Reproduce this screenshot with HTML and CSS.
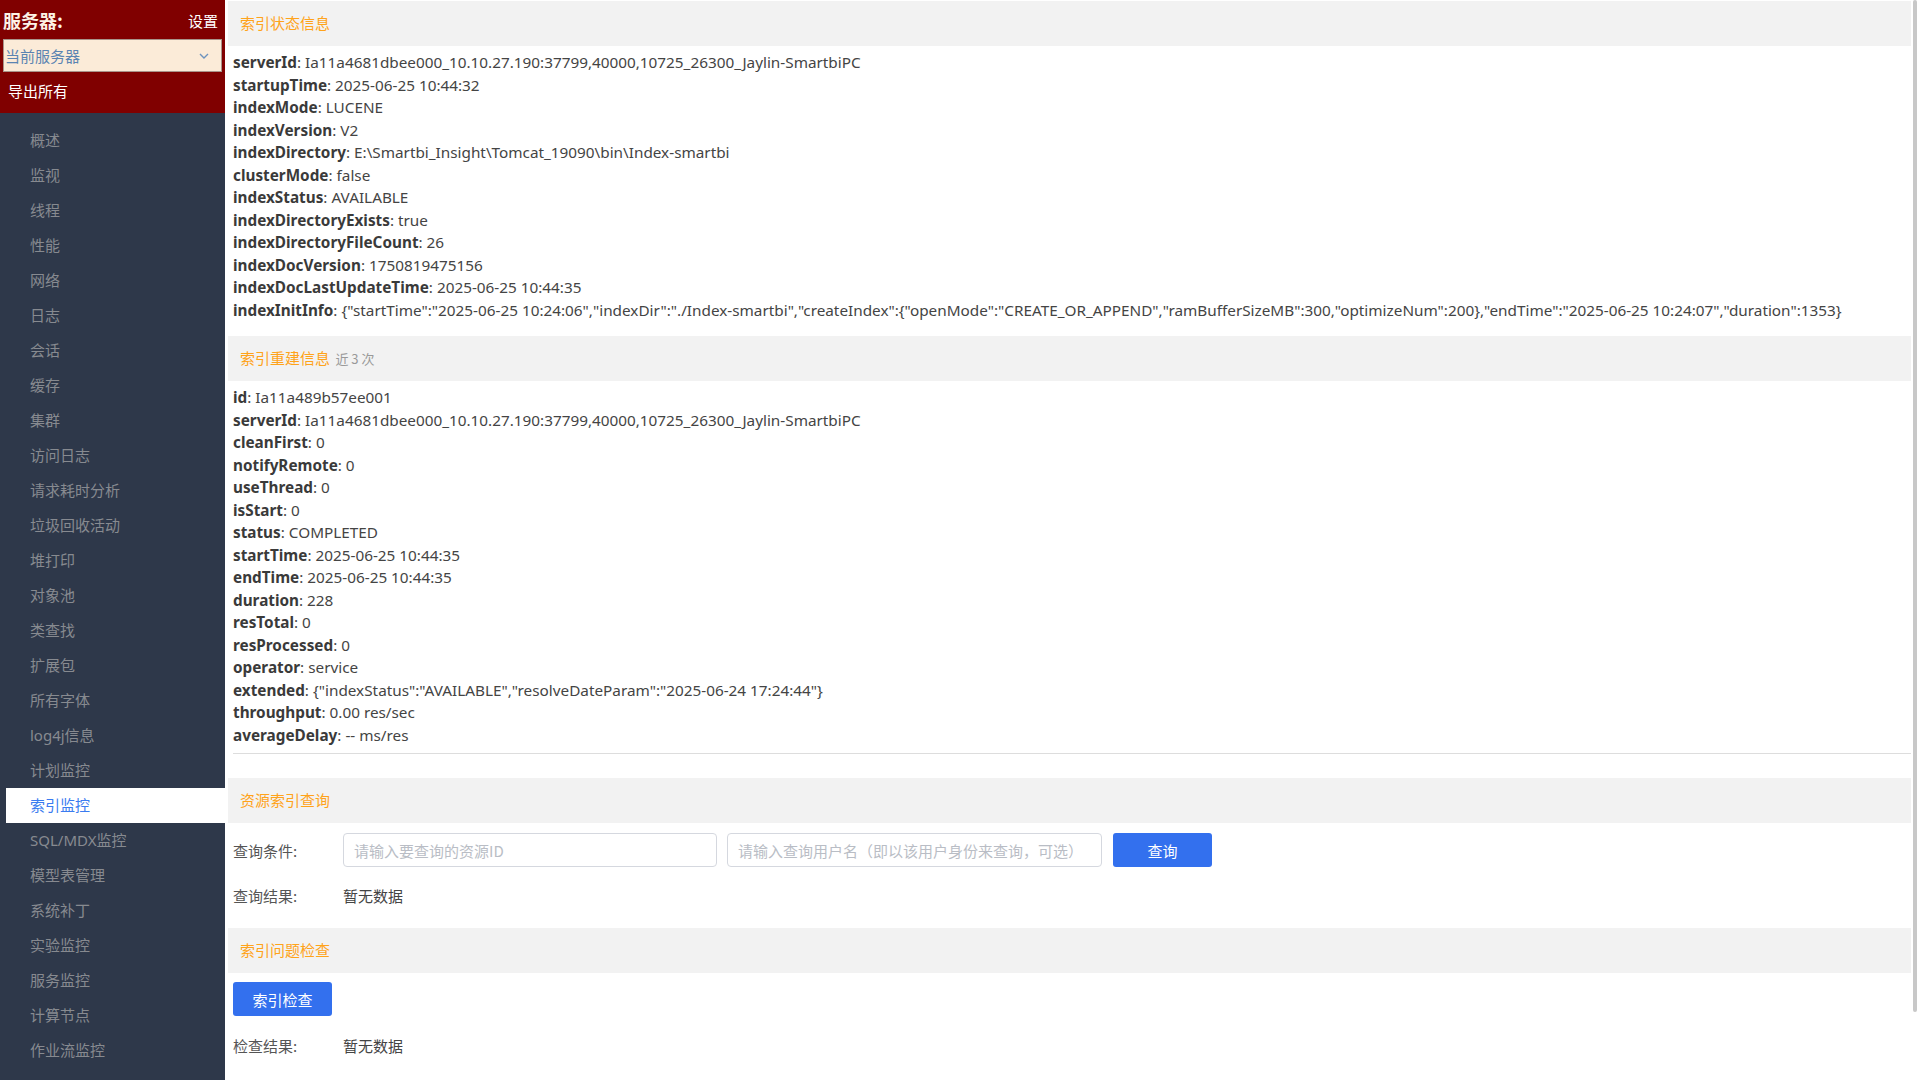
FILE: index.html
```html
<!DOCTYPE html>
<html lang="zh-CN">
<head>
<meta charset="utf-8">
<title>索引监控</title>
<link rel="stylesheet" href="styles.css">
</head>
<body>
<div class="app">
  <aside class="sidebar">
    <div class="side-head">
      <div class="title-row">
        <span class="title">服务器:</span>
        <span class="settings">设置</span>
      </div>
      <div class="select">
        <span>当前服务器</span>
        <svg class="chev" width="10" height="6" viewBox="0 0 10 6"><polyline points="1,1 5,5 9,1" fill="none" stroke="#6d93be" stroke-width="1.4"/></svg>
      </div>
      <div class="export">导出所有</div>
    </div>
    <nav class="nav">
      <div class="nav-item">概述</div>
      <div class="nav-item">监视</div>
      <div class="nav-item">线程</div>
      <div class="nav-item">性能</div>
      <div class="nav-item">网络</div>
      <div class="nav-item">日志</div>
      <div class="nav-item">会话</div>
      <div class="nav-item">缓存</div>
      <div class="nav-item">集群</div>
      <div class="nav-item">访问日志</div>
      <div class="nav-item">请求耗时分析</div>
      <div class="nav-item">垃圾回收活动</div>
      <div class="nav-item">堆打印</div>
      <div class="nav-item">对象池</div>
      <div class="nav-item">类查找</div>
      <div class="nav-item">扩展包</div>
      <div class="nav-item">所有字体</div>
      <div class="nav-item">log4j信息</div>
      <div class="nav-item">计划监控</div>
      <div class="nav-item active">索引监控</div>
      <div class="nav-item">SQL/MDX监控</div>
      <div class="nav-item">模型表管理</div>
      <div class="nav-item">系统补丁</div>
      <div class="nav-item">实验监控</div>
      <div class="nav-item">服务监控</div>
      <div class="nav-item">计算节点</div>
      <div class="nav-item">作业流监控</div>
    </nav>
  </aside>
  <main class="content">
    <div class="sec-head">索引状态信息</div>
    <div class="props first">
      <div class="prop"><b>serverId</b>: Ia11a4681dbee000_10.10.27.190:37799,40000,10725_26300_Jaylin-SmartbiPC</div>
      <div class="prop"><b>startupTime</b>: 2025-06-25 10:44:32</div>
      <div class="prop"><b>indexMode</b>: LUCENE</div>
      <div class="prop"><b>indexVersion</b>: V2</div>
      <div class="prop"><b>indexDirectory</b>: E:\Smartbi_Insight\Tomcat_19090\bin\Index-smartbi</div>
      <div class="prop"><b>clusterMode</b>: false</div>
      <div class="prop"><b>indexStatus</b>: AVAILABLE</div>
      <div class="prop"><b>indexDirectoryExists</b>: true</div>
      <div class="prop"><b>indexDirectoryFileCount</b>: 26</div>
      <div class="prop"><b>indexDocVersion</b>: 1750819475156</div>
      <div class="prop"><b>indexDocLastUpdateTime</b>: 2025-06-25 10:44:35</div>
      <div class="prop"><b>indexInitInfo</b>: {"startTime":"2025-06-25 10:24:06","indexDir":"./Index-smartbi","createIndex":{"openMode":"CREATE_OR_APPEND","ramBufferSizeMB":300,"optimizeNum":200},"endTime":"2025-06-25 10:24:07","duration":1353}</div>
    </div>
    <div class="sec-head">索引重建信息 <span class="sub">近 3 次</span></div>
    <div class="props">
      <div class="prop"><b>id</b>: Ia11a489b57ee001</div>
      <div class="prop"><b>serverId</b>: Ia11a4681dbee000_10.10.27.190:37799,40000,10725_26300_Jaylin-SmartbiPC</div>
      <div class="prop"><b>cleanFirst</b>: 0</div>
      <div class="prop"><b>notifyRemote</b>: 0</div>
      <div class="prop"><b>useThread</b>: 0</div>
      <div class="prop"><b>isStart</b>: 0</div>
      <div class="prop"><b>status</b>: COMPLETED</div>
      <div class="prop"><b>startTime</b>: 2025-06-25 10:44:35</div>
      <div class="prop"><b>endTime</b>: 2025-06-25 10:44:35</div>
      <div class="prop"><b>duration</b>: 228</div>
      <div class="prop"><b>resTotal</b>: 0</div>
      <div class="prop"><b>resProcessed</b>: 0</div>
      <div class="prop"><b>operator</b>: service</div>
      <div class="prop"><b>extended</b>: {"indexStatus":"AVAILABLE","resolveDateParam":"2025-06-24 17:24:44"}</div>
      <div class="prop"><b>throughput</b>: 0.00 res/sec</div>
      <div class="prop"><b>averageDelay</b>: -- ms/res</div>
    </div>
    <div class="divider"></div>
    <div class="sec-head sec3">资源索引查询</div>
    <div class="form-row query">
      <span class="label">查询条件:</span>
      <div class="input"><span class="ph">请输入要查询的资源ID</span></div>
      <div class="input second"><span class="ph">请输入查询用户名（即以该用户身份来查询，可选）</span></div>
      <div class="btn q">查询</div>
    </div>
    <div class="form-row result">
      <span class="label">查询结果:</span>
      <span class="val">暂无数据</span>
    </div>
    <div class="sec-head sec4">索引问题检查</div>
    <div class="check-row"><div class="btn c">索引检查</div></div>
    <div class="form-row result2">
      <span class="label">检查结果:</span>
      <span class="val">暂无数据</span>
    </div>
  </main>
  <div class="scrollbar"><div class="thumb"></div></div>
</div>
</body>
</html>
```
FILE: styles.css
```css
* { box-sizing: border-box; }
html, body { margin: 0; padding: 0; height: 100%; }
body {
  font-family: "Noto Sans", "Noto Sans CJK SC", sans-serif;
  background: #fff;
  overflow: hidden;
}
.app { display: flex; height: 1080px; }

.sidebar {
  width: 225px;
  flex: none;
  background: #2e384a;
  display: flex;
  flex-direction: column;
}
.side-head {
  background: #800000;
  height: 113px;
  padding: 8px 3px 0 3px;
}
.title-row {
  display: flex;
  justify-content: space-between;
  align-items: center;
  height: 24px;
}
.title {
  font-family: "Noto Sans CJK SC", sans-serif;
  font-weight: bold;
  font-size: 18px;
  color: #fdf3e6;
}
.settings {
  font-family: "Noto Sans CJK SC", sans-serif;
  font-size: 15px;
  color: #fff;
  padding-right: 4px;
}
.select {
  margin-top: 7px;
  height: 33px;
  background: #fbebd8;
  border: 1px solid #a9948a;
  display: flex;
  align-items: center;
  justify-content: space-between;
  padding: 0 12px 0 1px;
  font-family: "Noto Sans CJK SC", sans-serif;
  font-size: 15px;
  color: #5a84b2;
}
.export {
  font-family: "Noto Sans CJK SC", sans-serif;
  font-size: 15px;
  color: #fff;
  padding-left: 5px;
  margin-top: 9px;
  line-height: 20px;
}
.nav { padding-top: 10px; }
.nav-item {
  margin-left: 6px;
  height: 35px;
  line-height: 35px;
  padding-left: 24px;
  font-family: "Noto Sans", "Noto Sans CJK SC", sans-serif;
  font-size: 15px;
  color: #878a90;
}
.nav-item.active {
  background: #fff;
  color: #3a7bf0;
}

.content {
  flex: 1;
  margin-left: 3px;
  padding-top: 1px;
  min-width: 0;
}
.sec-head {
  height: 45px;
  line-height: 44px;
  background: #f2f2f2;
  padding-left: 12px;
  font-family: "Noto Sans CJK SC", sans-serif;
  font-size: 15px;
  color: #ffa31a;
}
.sec-head .sub {
  font-size: 13px;
  color: #999;
  margin-left: 2px;
}
.props {
  padding: 5px 0 0 5px;
  font-size: 15.3px;
  color: #444;
  line-height: 22.5px;
}
.props.first { margin-bottom: 15px; }
.prop { white-space: nowrap; height: 22.5px; }
.prop b { color: #3a3a3a; font-weight: 700; }

.divider {
  margin: 7px 0 0 5px;
  height: 1px;
  background: #dddddd;
}
.sec3 { margin-top: 24px; }

.form-row {
  display: flex;
  align-items: center;
  padding-left: 5px;
  font-family: "Noto Sans CJK SC", sans-serif;
  font-size: 15px;
  color: #555;
}
.label { width: 110px; flex: none; }
.val { color: #444; }
.query { margin-top: 10px; height: 34px; }
.input {
  width: 374px;
  height: 34px;
  border: 1px solid #d5d8df;
  border-radius: 4px;
  display: flex;
  align-items: center;
  padding-left: 10px;
}
.input.second { margin-left: 10px; width: 375px; }
.ph { color: #b9bdc5; font-size: 15px; }
.btn {
  height: 34px;
  width: 99px;
  border-radius: 3px;
  background: #3370ee;
  color: #fff;
  font-family: "Noto Sans CJK SC", sans-serif;
  font-size: 15px;
  display: flex;
  align-items: center;
  justify-content: center;
}
.btn.q { margin-left: 11px; }
.result { margin-top: 11px; height: 34px; }
.sec4 { margin-top: 16px; }
.check-row { padding-left: 5px; margin-top: 9px; }
.result2 { margin-top: 12px; height: 34px; }

.scrollbar {
  width: 9px;
  flex: none;
  padding: 0 3px 0 2px;
}
.thumb {
  width: 4px;
  height: 1012px;
  background: #c8c8c8;
  border-radius: 2px;
}
```
